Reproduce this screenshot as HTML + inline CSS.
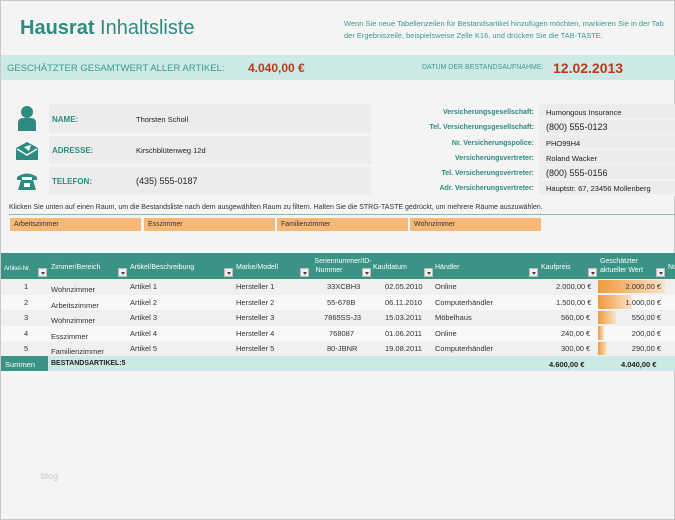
<!DOCTYPE html>
<html><head><meta charset="utf-8"><style>
*{margin:0;padding:0;box-sizing:border-box}
body{width:675px;height:520px;overflow:hidden;background:#f4f4f4;font-family:"Liberation Sans",sans-serif;position:relative;border:1px solid #c8c8c8;}
.a{position:absolute;white-space:nowrap}
.t{color:#2e8b80}
.g{background:#ececec}
.th{position:absolute;top:252px;height:26px;color:#fff;font-size:7px;line-height:9px}
.dd{position:absolute;width:9px;height:9px;background:#f0f0f0;border:1px solid #bbb;top:15px}
.dd:after{content:"";position:absolute;left:2px;top:3px;border-left:2px solid transparent;border-right:2px solid transparent;border-top:3px solid #444}
.r{position:absolute;left:0;width:675px;height:15.5px;font-size:7.5px;color:#333}
.r span{position:absolute;top:3px}
.r span.v{left:620px;width:40px;text-align:right}
</style></head><body>
<div class="a t" style="left:19px;top:16px;font-size:20px"><b>Hausrat</b> Inhaltsliste</div>
<div class="a" style="left:343px;top:17px;font-size:7.5px;line-height:12px;color:#3a9a8e">Wenn Sie neue Tabellenzeilen für Bestandsartikel hinzufügen möchten, markieren Sie in der Tab<br>der Ergebniszeile, beispielsweise Zelle K16, und drücken Sie die TAB-TASTE.</div>
<div class="a" style="left:0;top:54px;width:675px;height:25px;background:#cde9e6"></div>
<div class="a t" style="left:6px;top:62px;font-size:9.5px;color:#3a9a8e">GESCHÄTZTER GESAMTWERT ALLER ARTIKEL:</div>
<div class="a" style="left:247px;top:60px;font-size:12px;font-weight:bold;color:#b83a1c">4.040,00 €</div>
<div class="a" style="left:421px;top:63px;font-size:7px;color:#3a9a8e">DATUM DER BESTANDSAUFNAHME:</div>
<div class="a" style="left:552px;top:59px;font-size:14px;font-weight:bold;color:#b83a1c">12.02.2013</div>

<div class="a g" style="left:48px;top:103px;width:322px;height:29px"></div>
<div class="a g" style="left:48px;top:135px;width:322px;height:28px"></div>
<div class="a g" style="left:48px;top:166px;width:322px;height:28px"></div>
<svg class="a" style="left:16px;top:104px" width="20" height="26"><circle cx="10" cy="7" r="6" fill="#2e8b80"/><path d="M1 26 V18 Q1 13 6 13 H14 Q19 13 19 18 V26Z" fill="#2e8b80"/></svg>
<svg class="a" style="left:14px;top:140px" width="24" height="20"><path d="M1 7 L12 1 L23 7 V19 H1Z" fill="#2e8b80"/><path d="M2 8 L12 14 L22 8" stroke="#fff" stroke-width="1.5" fill="none"/><path d="M9 6 L16 4 L14 10Z" fill="#fff"/></svg>
<svg class="a" style="left:15px;top:170px" width="22" height="20"><path d="M1 6 Q11 -1 21 6 V9 H16 V6 H6 V9 H1Z" fill="#2e8b80"/><path d="M5 9 H17 L20 19 H2Z" fill="#2e8b80"/><rect x="8" y="12" width="6" height="4" fill="#fff"/></svg>
<div class="a t" style="left:51px;top:114px;font-size:8px;font-weight:bold">NAME:</div>
<div class="a t" style="left:51px;top:145px;font-size:8px;font-weight:bold">ADRESSE:</div>
<div class="a t" style="left:51px;top:176px;font-size:8px;font-weight:bold">TELEFON:</div>
<div class="a" style="left:135px;top:114px;font-size:7.5px;color:#222">Thorsten Scholl</div>
<div class="a" style="left:135px;top:145px;font-size:7.5px;color:#222">Kirschblütenweg 12d</div>
<div class="a" style="left:135px;top:175px;font-size:9px;color:#222">(435) 555-0187</div>

<div class="a" style="left:400px;top:104px;width:133px;font-size:7px;line-height:15.3px;text-align:right;color:#2e8b80;font-weight:bold">Versicherungsgesellschaft:<br>Tel. Versicherungsgesellschaft:<br>Nr. Versicherungspolice:<br>Versicherungsvertreter:<br>Tel. Versicherungsvertreter:<br>Adr. Versicherungsvertreter:</div>
<div class="a" style="left:538px;top:103px;width:137px;height:92px;background:repeating-linear-gradient(#ececec 0 14px,#f4f4f4 14px 15.3px)"></div>
<div class="a" style="left:545px;top:104px;font-size:7.5px;line-height:15.3px;color:#222">Humongous Insurance<br><span style="font-size:9px">(800) 555-0123</span><br>PHO99H4<br>Roland Wacker<br><span style="font-size:9px">(800) 555-0156</span><br>Hauptstr. 67, 23456 Mollenberg</div>

<div class="a" style="left:8px;top:203px;font-size:7px;color:#333">Klicken Sie unten auf einen Raum, um die Bestandsliste nach dem ausgewählten Raum zu filtern. Halten Sie die STRG-TASTE gedrückt, um mehrere Räume auszuwählen.</div>
<div class="a" style="left:8px;top:213px;width:667px;height:1px;background:#7cbfb6"></div>
<div class="a" style="left:9px;top:217px;width:131px;height:13px;background:#f5b877;font-size:7px;padding:3px 4px;color:#333">Arbeitszimmer</div>
<div class="a" style="left:143px;top:217px;width:131px;height:13px;background:#f5b877;font-size:7px;padding:3px 4px;color:#333">Esszimmer</div>
<div class="a" style="left:276px;top:217px;width:131px;height:13px;background:#f5b877;font-size:7px;padding:3px 4px;color:#333">Familienzimmer</div>
<div class="a" style="left:409px;top:217px;width:131px;height:13px;background:#f5b877;font-size:7px;padding:3px 4px;color:#333">Wohnzimmer</div>

<div class="a" style="left:0;top:252px;width:675px;height:26px;background:#3a9385"></div>
<div class="th" style="left:3px;top:264px;font-size:6px">Artikel-Nr.</div><div class="a dd" style="left:37px;top:267px"></div>
<div class="th" style="left:50px;top:262px">Zimmer/Bereich</div><div class="a dd" style="left:117px;top:267px"></div>
<div class="th" style="left:129px;top:262px">Artikel/Beschreibung</div><div class="a dd" style="left:223px;top:267px"></div>
<div class="th" style="left:235px;top:262px">Marke/Modell</div><div class="a dd" style="left:299px;top:267px"></div>
<div class="th" style="left:312px;top:256px;text-align:center;width:60px">Seriennummer/ID-<br><span style="position:relative;left:-14px">Nummer</span></div><div class="a dd" style="left:361px;top:267px"></div>
<div class="th" style="left:372px;top:262px">Kaufdatum</div><div class="a dd" style="left:423px;top:267px"></div>
<div class="th" style="left:434px;top:262px">Händler</div><div class="a dd" style="left:528px;top:267px"></div>
<div class="th" style="left:540px;top:262px">Kaufpreis</div><div class="a dd" style="left:587px;top:267px"></div>
<div class="th" style="left:599px;top:256px">Geschätzter<br>aktueller Wert</div><div class="a dd" style="left:655px;top:267px"></div>
<div class="th" style="left:667px;top:262px">No</div>

<div class="r" style="top:278px;background:#f0f0f0"><span style="left:23px">1</span><span style="left:50px;top:6px">Wohnzimmer</span><span style="left:129px">Artikel 1</span><span style="left:235px">Hersteller 1</span><span style="left:326px">33XCBH3</span><span style="left:384px">02.05.2010</span><span style="left:434px">Online</span><span style="left:555px">2.000,00 €</span></div>
<div class="r" style="top:293.5px;background:#f8f8f8"><span style="left:23px">2</span><span style="left:50px;top:6px">Arbeitszimmer</span><span style="left:129px">Artikel 2</span><span style="left:235px">Hersteller 2</span><span style="left:326px">55-678B</span><span style="left:384px">06.11.2010</span><span style="left:434px">Computerhändler</span><span style="left:555px">1.500,00 €</span></div>
<div class="r" style="top:309px;background:#f0f0f0"><span style="left:23px">3</span><span style="left:50px;top:6px">Wohnzimmer</span><span style="left:129px">Artikel 3</span><span style="left:235px">Hersteller 3</span><span style="left:323px">7865SS-J3</span><span style="left:384px">15.03.2011</span><span style="left:434px">Möbelhaus</span><span style="left:560px">560,00 €</span></div>
<div class="r" style="top:324.5px;background:#f8f8f8"><span style="left:23px">4</span><span style="left:50px;top:6px">Esszimmer</span><span style="left:129px">Artikel 4</span><span style="left:235px">Hersteller 4</span><span style="left:328px">768087</span><span style="left:384px">01.06.2011</span><span style="left:434px">Online</span><span style="left:560px">240,00 €</span></div>
<div class="r" style="top:340px;background:#f0f0f0"><span style="left:23px">5</span><span style="left:50px;top:6px">Familienzimmer</span><span style="left:129px">Artikel 5</span><span style="left:235px">Hersteller 5</span><span style="left:326px">80-JBNR</span><span style="left:384px">19.08.2011</span><span style="left:434px">Computerhändler</span><span style="left:560px">300,00 €</span></div>
<div class="a" style="left:597px;top:279px;width:67px;height:13px;background:linear-gradient(90deg,#ef9a3c,#fbe3c7)"></div>
<div class="a" style="left:597px;top:294px;width:34px;height:14px;background:linear-gradient(90deg,#ef9a3c,#fbe3c7)"></div>
<div class="a" style="left:597px;top:310px;width:18px;height:13px;background:linear-gradient(90deg,#ef9a3c,#fbe3c7)"></div>
<div class="a" style="left:597px;top:325px;width:6px;height:14px;background:linear-gradient(90deg,#ef9a3c,#fbe3c7)"></div>
<div class="a" style="left:597px;top:341px;width:9px;height:13px;background:linear-gradient(90deg,#ef9a3c,#fbe3c7)"></div>
<div class="r" style="top:278px;width:0"><span class="v">2.000,00 €</span></div>
<div class="r" style="top:293.5px;width:0"><span class="v">1.000,00 €</span></div>
<div class="r" style="top:309px;width:0"><span class="v">550,00 €</span></div>
<div class="r" style="top:324.5px;width:0"><span class="v">200,00 €</span></div>
<div class="r" style="top:340px;width:0"><span class="v">290,00 €</span></div>

<div class="a" style="left:0;top:355px;width:675px;height:15px;background:#cde9e6"></div>
<div class="a" style="left:0;top:355px;width:47px;height:15px;background:#3a9385;color:#fff;font-size:7.5px;padding:4px 4px">Summen</div>
<div class="a" style="left:50px;top:359px;font-size:7px;font-weight:bold;color:#222">BESTANDSARTIKEL:5</div>
<div class="a" style="left:548px;top:359px;font-size:7.5px;font-weight:bold;color:#222">4.600,00 €</div>
<div class="a" style="left:620px;top:359px;font-size:7.5px;font-weight:bold;color:#222">4.040,00 €</div>
<div class="a" style="left:40px;top:470px;font-size:9px;color:#c8c8c8">blog</div>
</body></html>
